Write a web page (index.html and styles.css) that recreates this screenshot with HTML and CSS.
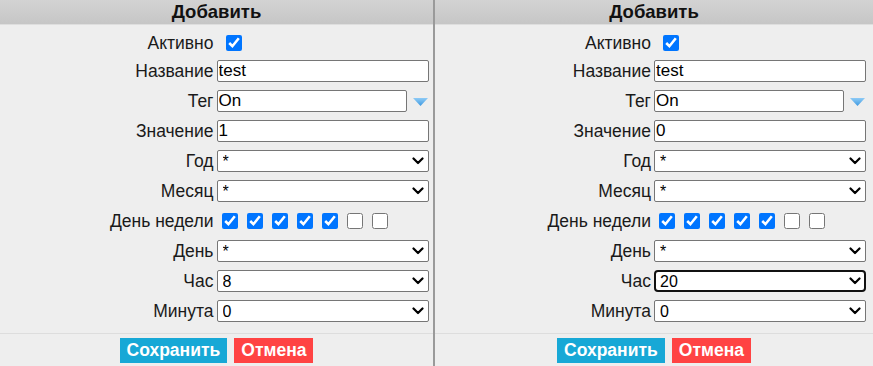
FILE: index.html
```html
<!DOCTYPE html>
<html lang="ru">
  <head>
    <meta charset="UTF-8" />
    <meta name="viewport" content="width=device-width, initial-scale=1.0" />
    <title>Добавить</title>
    <link rel="stylesheet" href="styles.css">
  </head>
  <body>
    <main class="panes">
      <!-- Left form -->
      <section class="pane">
        <header class="pane-title">Добавить</header>
        <div class="fields">
          <div class="field field-short">
            <label class="field-label">Активно</label>
            <div class="field-value"><input type="checkbox" class="check check-active" checked></div>
          </div>
          <div class="field">
            <label class="field-label">Название</label>
            <div class="field-value"><input type="text" class="text-input" value="test"></div>
          </div>
          <div class="field">
            <label class="field-label">Тег</label>
            <div class="field-value">
              <input type="text" class="text-input text-input-tag" value="On">
              <svg class="tag-arrow" viewBox="0 0 15 8" width="15" height="8">
                <defs>
                  <linearGradient id="arrowGrad1" x1="0" y1="0" x2="0" y2="1">
                    <stop offset="0" stop-color="#8ecbf6"/>
                    <stop offset="1" stop-color="#3d98e0"/>
                  </linearGradient>
                </defs>
                <path d="M0 0 H15 L7.5 8 Z" fill="url(#arrowGrad1)"/>
              </svg>
            </div>
          </div>
          <div class="field">
            <label class="field-label">Значение</label>
            <div class="field-value"><input type="text" class="text-input" value="1"></div>
          </div>
          <div class="field">
            <label class="field-label">Год</label>
            <div class="field-value">
              <div class="select-wrap">
                <select class="select"><option>*</option></select>
                <svg class="chevron" viewBox="0 0 12 8" width="12" height="8"><path d="M1.5 1.5 L6 6 L10.5 1.5" /></svg>
              </div>
            </div>
          </div>
          <div class="field">
            <label class="field-label">Месяц</label>
            <div class="field-value">
              <div class="select-wrap">
                <select class="select"><option>*</option></select>
                <svg class="chevron" viewBox="0 0 12 8" width="12" height="8"><path d="M1.5 1.5 L6 6 L10.5 1.5" /></svg>
              </div>
            </div>
          </div>
          <div class="field">
            <label class="field-label">День недели</label>
            <div class="field-value week">
              <input type="checkbox" class="check" checked>
              <input type="checkbox" class="check" checked>
              <input type="checkbox" class="check" checked>
              <input type="checkbox" class="check" checked>
              <input type="checkbox" class="check" checked>
              <input type="checkbox" class="check">
              <input type="checkbox" class="check">
            </div>
          </div>
          <div class="field">
            <label class="field-label">День</label>
            <div class="field-value">
              <div class="select-wrap">
                <select class="select"><option>*</option></select>
                <svg class="chevron" viewBox="0 0 12 8" width="12" height="8"><path d="M1.5 1.5 L6 6 L10.5 1.5" /></svg>
              </div>
            </div>
          </div>
          <div class="field">
            <label class="field-label">Час</label>
            <div class="field-value">
              <div class="select-wrap">
                <select class="select"><option>8</option></select>
                <svg class="chevron" viewBox="0 0 12 8" width="12" height="8"><path d="M1.5 1.5 L6 6 L10.5 1.5" /></svg>
              </div>
            </div>
          </div>
          <div class="field">
            <label class="field-label">Минута</label>
            <div class="field-value">
              <div class="select-wrap">
                <select class="select"><option>0</option></select>
                <svg class="chevron" viewBox="0 0 12 8" width="12" height="8"><path d="M1.5 1.5 L6 6 L10.5 1.5" /></svg>
              </div>
            </div>
          </div>
        </div>
        <footer class="actions">
          <button class="btn btn-save">Сохранить</button>
          <button class="btn btn-cancel">Отмена</button>
        </footer>
      </section>

      <!-- Right form -->
      <section class="pane">
        <header class="pane-title">Добавить</header>
        <div class="fields">
          <div class="field field-short">
            <label class="field-label">Активно</label>
            <div class="field-value"><input type="checkbox" class="check check-active" checked></div>
          </div>
          <div class="field">
            <label class="field-label">Название</label>
            <div class="field-value"><input type="text" class="text-input" value="test"></div>
          </div>
          <div class="field">
            <label class="field-label">Тег</label>
            <div class="field-value">
              <input type="text" class="text-input text-input-tag" value="On">
              <svg class="tag-arrow" viewBox="0 0 15 8" width="15" height="8">
                <defs>
                  <linearGradient id="arrowGrad2" x1="0" y1="0" x2="0" y2="1">
                    <stop offset="0" stop-color="#8ecbf6"/>
                    <stop offset="1" stop-color="#3d98e0"/>
                  </linearGradient>
                </defs>
                <path d="M0 0 H15 L7.5 8 Z" fill="url(#arrowGrad2)"/>
              </svg>
            </div>
          </div>
          <div class="field">
            <label class="field-label">Значение</label>
            <div class="field-value"><input type="text" class="text-input" value="0"></div>
          </div>
          <div class="field">
            <label class="field-label">Год</label>
            <div class="field-value">
              <div class="select-wrap">
                <select class="select"><option>*</option></select>
                <svg class="chevron" viewBox="0 0 12 8" width="12" height="8"><path d="M1.5 1.5 L6 6 L10.5 1.5" /></svg>
              </div>
            </div>
          </div>
          <div class="field">
            <label class="field-label">Месяц</label>
            <div class="field-value">
              <div class="select-wrap">
                <select class="select"><option>*</option></select>
                <svg class="chevron" viewBox="0 0 12 8" width="12" height="8"><path d="M1.5 1.5 L6 6 L10.5 1.5" /></svg>
              </div>
            </div>
          </div>
          <div class="field">
            <label class="field-label">День недели</label>
            <div class="field-value week">
              <input type="checkbox" class="check" checked>
              <input type="checkbox" class="check" checked>
              <input type="checkbox" class="check" checked>
              <input type="checkbox" class="check" checked>
              <input type="checkbox" class="check" checked>
              <input type="checkbox" class="check">
              <input type="checkbox" class="check">
            </div>
          </div>
          <div class="field">
            <label class="field-label">День</label>
            <div class="field-value">
              <div class="select-wrap">
                <select class="select"><option>*</option></select>
                <svg class="chevron" viewBox="0 0 12 8" width="12" height="8"><path d="M1.5 1.5 L6 6 L10.5 1.5" /></svg>
              </div>
            </div>
          </div>
          <div class="field">
            <label class="field-label">Час</label>
            <div class="field-value">
              <div class="select-wrap">
                <select class="select select-focus"><option>20</option></select>
                <svg class="chevron" viewBox="0 0 12 8" width="12" height="8"><path d="M1.5 1.5 L6 6 L10.5 1.5" /></svg>
              </div>
            </div>
          </div>
          <div class="field">
            <label class="field-label">Минута</label>
            <div class="field-value">
              <div class="select-wrap">
                <select class="select"><option>0</option></select>
                <svg class="chevron" viewBox="0 0 12 8" width="12" height="8"><path d="M1.5 1.5 L6 6 L10.5 1.5" /></svg>
              </div>
            </div>
          </div>
        </div>
        <footer class="actions">
          <button class="btn btn-save">Сохранить</button>
          <button class="btn btn-cancel">Отмена</button>
        </footer>
      </section>
    </main>
  </body>
</html>
```

FILE: styles.css
```css
:root {
  --bg-body: #eeeeee;
  --text-main: #1a1a1a;
  --border-input: #767676;
  --divider: #9a9a9a;
  --save-color: #17a8d6;
  --cancel-color: #ff4343;
}

* {
  margin: 0;
  padding: 0;
  box-sizing: border-box;
}

body {
  background-color: var(--bg-body);
  color: var(--text-main);
  font-family: "Liberation Sans", Arial, sans-serif;
  height: 366px;
  overflow: hidden;
}

.panes {
  display: flex;
  height: 366px;
}

.pane {
  flex: 1;
  display: flex;
  flex-direction: column;
}

.pane:first-child {
  flex: 0 0 435px;
  border-right: 2px solid var(--divider);
}

/* Title bar */
.pane-title {
  height: 25px;
  line-height: 24px;
  text-align: center;
  font-size: 18.5px;
  font-weight: 700;
  color: #111;
  background: linear-gradient(#d3d3d3, #c6c6c6);
  border-bottom: 1px solid #dedede;
}

/* Form rows */
.fields {
  padding-top: 5px;
}

.field {
  display: grid;
  grid-template-columns: 1fr 1fr;
  align-items: center;
  height: 30px;
}

.field-short {
  height: 26px;
}

.field-label {
  text-align: right;
  padding-right: 3px;
  font-size: 17.5px;
}

.field-value {
  display: flex;
  align-items: center;
}

.text-input {
  width: 212px;
  height: 22px;
  padding: 0 1px;
  border: 1px solid var(--border-input);
  border-radius: 2px;
  background: #fff;
  color: #000;
  font-family: "Liberation Sans", Arial, sans-serif;
  font-size: 17px;
  outline: none;
}

.text-input-tag {
  width: 190px;
}

.tag-arrow {
  margin-left: 6px;
  margin-top: 1px;
}

.select-wrap {
  position: relative;
  width: 212px;
  height: 22px;
}

.select {
  appearance: none;
  -webkit-appearance: none;
  width: 100%;
  height: 100%;
  padding: 0 5px;
  border: 1px solid var(--border-input);
  border-radius: 2px;
  background: #fff;
  color: #000;
  font-family: "Liberation Sans", Arial, sans-serif;
  font-size: 16px;
  outline: none;
}

.select-focus {
  border: 2px solid #111;
  border-radius: 4px;
  padding-left: 4px;
}

.chevron {
  position: absolute;
  right: 5px;
  top: 7px;
  pointer-events: none;
}

.chevron path {
  fill: none;
  stroke: #000;
  stroke-width: 2.2;
  stroke-linecap: round;
  stroke-linejoin: round;
}

/* Checkboxes */
.check {
  width: 16px;
  height: 16px;
  accent-color: #0075ff;
}

.check-active {
  margin-left: 9px;
}

.week {
  gap: 9px;
  padding-left: 5px;
}

/* Buttons */
.actions {
  margin-top: 7px;
  padding-top: 4px;
  border-top: 1px solid #dddddd;
  display: flex;
  justify-content: center;
  gap: 7px;
}

.btn {
  height: 25px;
  padding: 0 7px;
  border: none;
  color: #fff;
  font-family: "Liberation Sans", Arial, sans-serif;
  font-size: 17.5px;
  font-weight: 700;
  cursor: pointer;
}

.btn-save {
  background-color: var(--save-color);
}

.btn-cancel {
  background-color: var(--cancel-color);
}
```
